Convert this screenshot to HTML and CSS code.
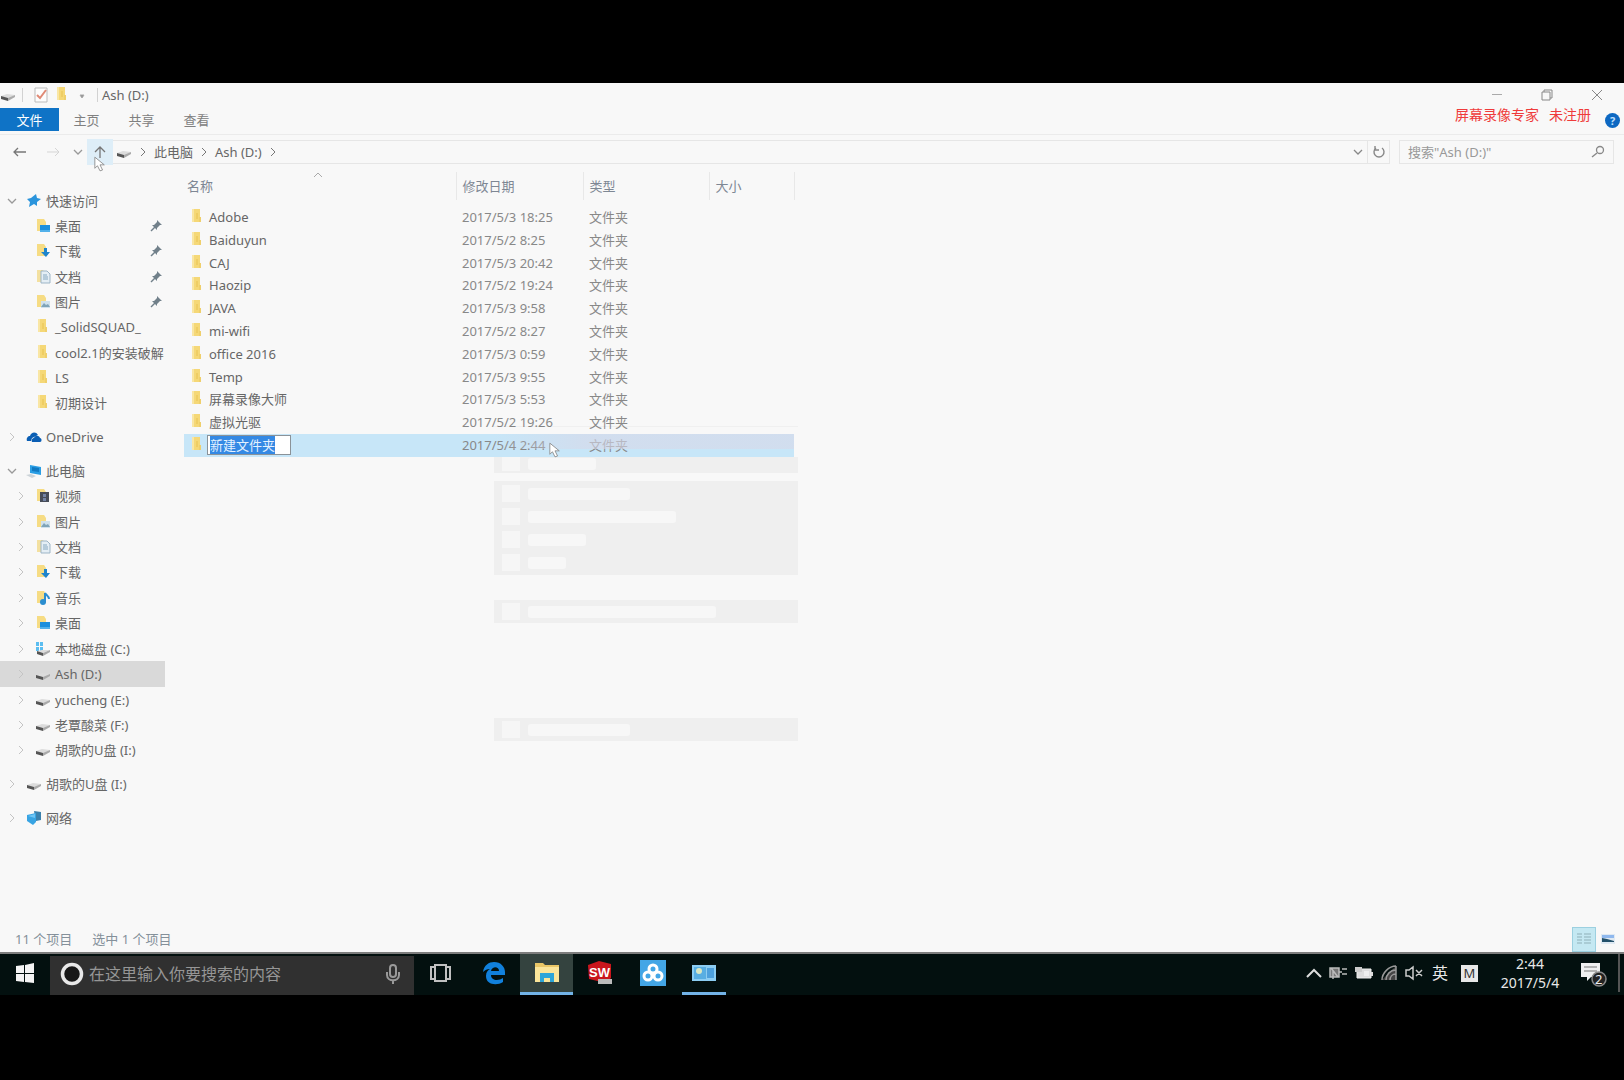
FILE: index.html
```html
<!DOCTYPE html>
<html lang="zh-CN">
<head>
<meta charset="utf-8">
<title>Ash (D:)</title>
<link rel="stylesheet" href="styles.css">
</head>
<body>
<svg class="defs" aria-hidden="true">
  <symbol id="folder" viewBox="0 0 16 16"><path d="M3 0h8v13H3z" fill="#f5d877"/><path d="M10 8h2v5h-2z" fill="#efcf6c"/><path d="M3 0h2v13H3z" fill="#f9e6a4"/><path d="M8 4v6" stroke="#e8c252" stroke-width="1"/></symbol>
  <symbol id="f-desktop" viewBox="0 0 16 16"><path d="M2 1h7l2 3v9H2z" fill="#f6dc84"/><path d="M5 7h10v7H5z" fill="#1b8fdd"/><path d="M5 12h10v2H5z" fill="#52b1ea"/></symbol>
  <symbol id="f-down" viewBox="0 0 16 16"><path d="M2 1h7l2 3v9H2z" fill="#f6dc84"/><path d="M9 5h3v4h3l-4 5-5-5h3z" fill="#1d84cc"/></symbol>
  <symbol id="f-doc" viewBox="0 0 16 16"><path d="M2 1h6l2 3v9H2z" fill="#f3e0a0"/><path d="M6 2h6l3 3v9H6z" fill="#e4eef5" stroke="#9db5c6"/><path d="M8 6h4M8 8h5M8 10h5" stroke="#86a8c0"/></symbol>
  <symbol id="f-pic" viewBox="0 0 16 16"><path d="M2 1h7l2 3v9H2z" fill="#f6dc84"/><path d="M6 7h9v7H6z" fill="#cfe1ec"/><path d="M6 13l3-4 2 2 2-1 2 3z" fill="#7fa4b8"/></symbol>
  <symbol id="f-video" viewBox="0 0 16 16"><path d="M2 1h7l2 3v9H2z" fill="#f6dc84"/><path d="M5 4h9v10H5z" fill="#474d59"/><path d="M8 6h3v3H8zM8 10h3v3H8z" fill="#7484a6"/></symbol>
  <symbol id="f-music" viewBox="0 0 16 16"><path d="M2 1h7l2 3v9H2z" fill="#f6dc84"/><path d="M10 3v9" stroke="#2b8ed0" stroke-width="2"/><path d="M10 3c1 2 4 3 4 6" fill="none" stroke="#2b8ed0" stroke-width="2"/><circle cx="8" cy="12" r="3" fill="#2b8ed0"/></symbol>
  <symbol id="drive" viewBox="0 0 16 16"><path d="M1 9l6-2 8 1-7 4z" fill="#dcdcdc"/><path d="M1 9l7 2v3l-7-2z" fill="#555"/><path d="M8 11l7-3v2l-7 4z" fill="#aaa"/></symbol>
  <symbol id="drive-c" viewBox="0 0 16 16"><path d="M1 1h3v4H1zM5 1h3v4H5zM1 6h3v4H1zM5 6h3v4H5z" fill="#5bbdf0"/><path d="M2 10l5-1 8 0-7 3z" fill="#dcdcdc"/><path d="M2 10l6 2v3l-6-2z" fill="#555"/><path d="M8 12l7-3v2l-7 4z" fill="#aaa"/></symbol>
  <symbol id="star" viewBox="0 0 16 16"><path d="M10 1l1 4 4 1-4 3 0 4-3-2-5 3 1-5-3-3 4-1z" fill="#2a94dc"/></symbol>
  <symbol id="cloud" viewBox="0 0 16 16"><path d="M1 12c-1-3 1-5 3-5 1-4 6-5 8-1L6 9l-1 3z" fill="#0a5eb4"/><path d="M6 13c-1-3 1-4 2-4 1-3 5-3 6 0 2 0 2 4 0 4z" fill="#0a5eb4"/></symbol>
  <symbol id="pc" viewBox="0 0 16 16"><path d="M4 2l11 2v8l-11-2z" fill="#2a9ee4"/><path d="M6 4l7 1v4L6 8z" fill="#1179c2"/><path d="M0 12l5-1 5 2-4 2z" fill="#ccd3d8"/></symbol>
  <symbol id="net" viewBox="0 0 16 16"><path d="M8 1l7 1v8l-5 1z" fill="#3a80ac"/><path d="M1 5l9-2v9l-3 3-6-4z" fill="#38a4e3"/><path d="M2 6l7-2v4z" fill="#6dc4f4"/></symbol>
  <symbol id="right" viewBox="0 0 16 16"><path d="M6 4l4 4-4 4" fill="none" stroke="currentColor"/></symbol>
  <symbol id="down" viewBox="0 0 16 16"><path d="M4 6l4 4 4-4" fill="none" stroke="currentColor" stroke-width="1.3"/></symbol>
  <symbol id="pin" viewBox="0 0 16 16"><path d="M9 2l5 5-2 0-3 3 0 2-5-5 2 0 3-3z" fill="#71808a"/><path d="M7 9l-4 4" stroke="#71808a" stroke-width="1.5"/></symbol>
  <symbol id="pointer" viewBox="0 0 14 18"><path d="M1 1v13l3-3 3 6 3-1-3-6h5z" fill="#fff" stroke="#888"/></symbol>
</svg>

<main class="window">
  <header class="titlebar">
    <svg class="icon"><use href="#drive"/></svg>
    <span class="rule"></span>
    <button class="quick" aria-label="属性"><svg class="icon" viewBox="0 0 16 16"><path d="M2 1h12v14H2z" fill="#fdfdfd" stroke="#bbb"/><path d="M4 8l3 3 6-8" fill="none" stroke="#e08a76" stroke-width="2"/></svg></button>
    <button class="quick" aria-label="新建文件夹"><svg class="icon"><use href="#folder"/></svg></button>
    <button class="quick" aria-label="自定义"><svg class="icon" viewBox="0 0 16 16"><path d="M5 8l2 3 2-3z" fill="#888" stroke="#aaa"/></svg></button>
    <span class="rule"></span>
    <h1 class="title">Ash (D:)</h1>
    <div class="controls">
      <button aria-label="最小化"><svg class="icon" viewBox="0 0 16 16"><path d="M3 7.500h10" stroke="#aaa"/></svg></button>
      <button aria-label="还原"><svg class="icon" viewBox="0 0 16 16"><path d="M3 5h8v8H3zM5 5V3h8v8h-2" fill="none" stroke="#888"/></svg></button>
      <button aria-label="关闭"><svg class="icon" viewBox="0 0 16 16"><path d="M3 3l10 10M13 3L3 13" stroke="#888"/></svg></button>
    </div>
  </header>

  <nav class="tabs">
    <button class="file-tab">文件</button>
    <button>主页</button>
    <button>共享</button>
    <button>查看</button>
    <span class="watermark"><span>屏幕录像专家</span><span>未注册</span></span>
    <button class="help" aria-label="帮助">?</button>
  </nav>

  <div class="address-row">
    <div class="history">
      <button aria-label="后退"><svg class="icon" viewBox="0 0 16 16"><path d="M14 8H2M6 4L2 8l4 4" fill="none" stroke="#777" stroke-width="1.300"/></svg></button>
      <button aria-label="前进"><svg class="icon" viewBox="0 0 16 16"><path d="M2 8h12M10 4l4 4-4 4" fill="none" stroke="#d5d5d5"/></svg></button>
      <button class="recent" aria-label="最近位置"><svg class="icon"><use href="#down"/></svg></button>
      <button class="up" aria-label="上移"><svg class="icon" viewBox="0 0 16 16"><path d="M8 14V3M3 8l5-5 5 5" fill="none" stroke="#777" stroke-width="1.300"/></svg><svg class="pointer up-pointer"><use href="#pointer"/></svg></button>
    </div>
    <div class="address">
      <svg class="icon"><use href="#drive"/></svg>
      <svg class="icon crumb-arrow"><use href="#right"/></svg>
      <a href="#pc">此电脑</a>
      <svg class="icon crumb-arrow"><use href="#right"/></svg>
      <a href="#d">Ash (D:)</a>
      <svg class="icon crumb-arrow"><use href="#right"/></svg>
      <button class="drop" aria-label="历史记录"><svg class="icon"><use href="#down"/></svg></button>
      <button class="refresh" aria-label="刷新"><svg class="icon" viewBox="0 0 16 16"><path d="M5 4a5 5 0 1 0 6 0M4 2v4h4" fill="none" stroke="#888" stroke-width="1.400"/></svg></button>
    </div>
    <label class="search"><input type="text" aria-label="搜索" placeholder='搜索"Ash (D:)"'><svg class="icon" viewBox="0 0 16 16"><circle cx="10" cy="6" r="3.500" fill="none" stroke="#888" stroke-width="1.300"/><path d="M7 9l-5 4" stroke="#888" stroke-width="1.500"/></svg></label>
  </div>

  <div class="content">
    <nav class="tree">
      <ul class="quick-group">
        <li><svg class="icon open"><use href="#down"/></svg><svg class="icon"><use href="#star"/></svg><a href="#q">快速访问</a></li>
        <li class="sub"><i></i><svg class="icon"><use href="#f-desktop"/></svg><a href="#1">桌面</a><svg class="icon pin"><use href="#pin"/></svg></li>
        <li class="sub"><i></i><svg class="icon"><use href="#f-down"/></svg><a href="#2">下载</a><svg class="icon pin"><use href="#pin"/></svg></li>
        <li class="sub"><i></i><svg class="icon"><use href="#f-doc"/></svg><a href="#3">文档</a><svg class="icon pin"><use href="#pin"/></svg></li>
        <li class="sub"><i></i><svg class="icon"><use href="#f-pic"/></svg><a href="#4">图片</a><svg class="icon pin"><use href="#pin"/></svg></li>
        <li class="sub"><i></i><svg class="icon"><use href="#folder"/></svg><a href="#5">_SolidSQUAD_</a></li>
        <li class="sub"><i></i><svg class="icon"><use href="#folder"/></svg><a href="#6">cool2.1的安装破解</a></li>
        <li class="sub"><i></i><svg class="icon"><use href="#folder"/></svg><a href="#7">LS</a></li>
        <li class="sub"><i></i><svg class="icon"><use href="#folder"/></svg><a href="#8">初期设计</a></li>
      </ul>
      <ul><li><svg class="icon closed"><use href="#right"/></svg><svg class="icon"><use href="#cloud"/></svg><a href="#od">OneDrive</a></li></ul>
      <ul class="pc-group">
        <li><svg class="icon open"><use href="#down"/></svg><svg class="icon"><use href="#pc"/></svg><a href="#pc">此电脑</a></li>
        <li class="sub"><svg class="icon closed"><use href="#right"/></svg><svg class="icon"><use href="#f-video"/></svg><a href="#v">视频</a></li>
        <li class="sub"><svg class="icon closed"><use href="#right"/></svg><svg class="icon"><use href="#f-pic"/></svg><a href="#p">图片</a></li>
        <li class="sub"><svg class="icon closed"><use href="#right"/></svg><svg class="icon"><use href="#f-doc"/></svg><a href="#w">文档</a></li>
        <li class="sub"><svg class="icon closed"><use href="#right"/></svg><svg class="icon"><use href="#f-down"/></svg><a href="#x">下载</a></li>
        <li class="sub"><svg class="icon closed"><use href="#right"/></svg><svg class="icon"><use href="#f-music"/></svg><a href="#m">音乐</a></li>
        <li class="sub"><svg class="icon closed"><use href="#right"/></svg><svg class="icon"><use href="#f-desktop"/></svg><a href="#z">桌面</a></li>
        <li class="sub"><svg class="icon closed"><use href="#right"/></svg><svg class="icon"><use href="#drive-c"/></svg><a href="#c">本地磁盘 (C:)</a></li>
        <li class="sub current"><svg class="icon closed"><use href="#right"/></svg><svg class="icon"><use href="#drive"/></svg><a href="#d">Ash (D:)</a></li>
        <li class="sub"><svg class="icon closed"><use href="#right"/></svg><svg class="icon"><use href="#drive"/></svg><a href="#e">yucheng (E:)</a></li>
        <li class="sub"><svg class="icon closed"><use href="#right"/></svg><svg class="icon"><use href="#drive"/></svg><a href="#f">老覃酸菜 (F:)</a></li>
        <li class="sub"><svg class="icon closed"><use href="#right"/></svg><svg class="icon"><use href="#drive"/></svg><a href="#i">胡歌的U盘 (I:)</a></li>
      </ul>
      <ul><li><svg class="icon closed"><use href="#right"/></svg><svg class="icon"><use href="#drive"/></svg><a href="#i">胡歌的U盘 (I:)</a></li></ul>
      <ul><li><svg class="icon closed"><use href="#right"/></svg><svg class="icon"><use href="#net"/></svg><a href="#n">网络</a></li></ul>
    </nav>

    <section class="files">
      <table class="list">
        <colgroup><col class="c-name"><col class="c-date"><col class="c-type"><col class="c-size"></colgroup>
        <thead><tr><th>名称<svg class="sort" viewBox="0 0 10 6"><path d="M1 5l4-4 4 4" fill="none" stroke="#aaa"/></svg></th><th>修改日期</th><th>类型</th><th>大小</th></tr></thead>
        <tbody>
          <tr><td><span class="name"><svg class="icon"><use href="#folder"/></svg>Adobe</span></td><td>2017/5/3 18:25</td><td>文件夹</td><td></td></tr>
          <tr><td><span class="name"><svg class="icon"><use href="#folder"/></svg>Baiduyun</span></td><td>2017/5/2 8:25</td><td>文件夹</td><td></td></tr>
          <tr><td><span class="name"><svg class="icon"><use href="#folder"/></svg>CAJ</span></td><td>2017/5/3 20:42</td><td>文件夹</td><td></td></tr>
          <tr><td><span class="name"><svg class="icon"><use href="#folder"/></svg>Haozip</span></td><td>2017/5/2 19:24</td><td>文件夹</td><td></td></tr>
          <tr><td><span class="name"><svg class="icon"><use href="#folder"/></svg>JAVA</span></td><td>2017/5/3 9:58</td><td>文件夹</td><td></td></tr>
          <tr><td><span class="name"><svg class="icon"><use href="#folder"/></svg>mi-wifi</span></td><td>2017/5/2 8:27</td><td>文件夹</td><td></td></tr>
          <tr><td><span class="name"><svg class="icon"><use href="#folder"/></svg>office 2016</span></td><td>2017/5/3 0:59</td><td>文件夹</td><td></td></tr>
          <tr><td><span class="name"><svg class="icon"><use href="#folder"/></svg>Temp</span></td><td>2017/5/3 9:55</td><td>文件夹</td><td></td></tr>
          <tr><td><span class="name"><svg class="icon"><use href="#folder"/></svg>屏幕录像大师</span></td><td>2017/5/3 5:53</td><td>文件夹</td><td></td></tr>
          <tr><td><span class="name"><svg class="icon"><use href="#folder"/></svg>虚拟光驱</span></td><td>2017/5/2 19:26</td><td>文件夹</td><td></td></tr>
          <tr class="selected"><td><span class="name"><svg class="icon"><use href="#folder"/></svg><input class="rename" type="text" aria-label="文件夹名称" value="新建文件夹"></span></td><td>2017/5/4 2:44</td><td>文件夹</td><td></td></tr>
        </tbody>
      </table>
      <div class="fading-menu" aria-hidden="true">
        <div class="band tint"></div>
        <div class="band first"><p><b></b><s class="w68"></s></p></div>
        <div class="band four"><p><b></b><s class="w100"></s></p><p><b></b><s class="w148"></s></p><p><b></b><s class="w58"></s></p><p><b></b><s class="w38"></s></p></div>
        <div class="band far"><p><b></b><s class="w188"></s></p></div>
        <div class="band last"><p><b></b><s class="w100"></s></p></div>
      </div>
      <svg class="pointer list-pointer"><use href="#pointer"/></svg>
    </section>
  </div>

  <footer class="status">
    <span>11 个项目</span><span>选中 1 个项目</span>
    <div class="views">
      <button class="active" aria-label="详细信息"><svg class="icon" viewBox="0 0 16 16"><path d="M1 3h5M1 6h5M1 9h5M1 12h5M8 3h7M8 6h7M8 9h7M8 12h7" stroke="#8fb0b8"/></svg></button>
      <button aria-label="大图标"><svg class="icon" viewBox="0 0 16 16"><path d="M1 3h14v10H1z" fill="#dfe9f2"/><path d="M2 4h12v3H2z" fill="#8fb8ee"/><path d="M2 7l5 1 7 2v1H2z" fill="#23506a"/></svg></button>
    </div>
  </footer>
</main>

<footer class="taskbar">
  <button class="start" aria-label="开始"><svg class="glyph" viewBox="0 0 24 24"><path d="M3 5l8-1v8H3zM12 4l9-2v10h-9zM3 13h8v8l-8-1zM12 13h9v9l-9-1z" fill="#f4f4f4"/></svg></button>
  <label class="cortana"><svg class="glyph" viewBox="0 0 24 24"><circle cx="12" cy="12" r="9.500" fill="#171717" stroke="#e8e8e8" stroke-width="3.500"/></svg><input type="text" aria-label="搜索" placeholder="在这里输入你要搜索的内容"><svg class="glyph" viewBox="0 0 24 24"><rect x="9" y="3" width="6" height="12" rx="3" fill="none" stroke="#999" stroke-width="2"/><path d="M6 10v3c0 7 12 7 12 0v-3M12 18v4" fill="none" stroke="#999" stroke-width="2"/></svg></label>
  <button class="app" aria-label="任务视图"><svg class="glyph" viewBox="0 0 24 24"><path d="M6 4h11v16H6zM5 6H2v12h3M18 6h3v12h-3" fill="none" stroke="#c0c0c0" stroke-width="2"/></svg></button>
  <button class="app" aria-label="Edge"><svg class="glyph" viewBox="0 0 24 24"><path d="M1 11C2 4 7 1 12 1c7 0 11 5 11 10v3H9c0 6 8 6 12 3v4c-6 4-17 3-17-6 0-4 2-6 4-7-3 0-5 1-7 3zM9 10h8c0-5-7-5-8 0z" fill="#1180dc"/></svg></button>
  <button class="app active" aria-label="文件资源管理器"><svg class="glyph" viewBox="0 0 24 24"><path d="M0 2h8l2 2h14v17H0z" fill="#e9c667"/><path d="M0 6h24v15H0z" fill="#fbe59a"/><path d="M5 12h14v9h-4v-4H9v4H5z" fill="#2da5d8"/></svg></button>
  <button class="app" aria-label="SolidWorks"><svg class="glyph" viewBox="0 0 24 24"><path d="M0 4l11-4 12 3v14l-5 5-17-4z" fill="#c9161d"/><text x="1" y="16" class="sw">SW</text><path d="M10 18h14v5H10z" fill="#bbb"/></svg></button>
  <button class="app" aria-label="百度网盘"><svg class="tile" viewBox="0 0 26 26"><path d="M0 0h26v26H0z" fill="#43a6e6"/><g fill="none" stroke="#fff" stroke-width="3"><circle cx="13" cy="9" r="4"/><circle cx="8" cy="16" r="4"/><circle cx="18" cy="16" r="4"/></g></svg></button>
  <button class="app running" aria-label="控制面板"><svg class="glyph" viewBox="0 0 24 24"><path d="M0 4h24v16H0z" fill="#8ccdf2"/><path d="M2 6h12v12H2z" fill="#58aee2"/><circle cx="7" cy="10" r="3" fill="#d9e7c3"/><path d="M15 7h7v10h-7z" fill="#4da0dc"/></svg></button>
  <div class="tray">
    <svg class="tray-icon" viewBox="0 0 20 20"><path d="M3 14l7-7 7 7" fill="none" stroke="#ddd" stroke-width="2"/></svg>
    <svg class="tray-icon" viewBox="0 0 20 20"><path d="M1 5h9v9H1zM10 9h3M13 6h5M13 11h5M2 5l7 9M4 16V8" fill="#777" stroke="#bbb" stroke-width="1.500"/></svg>
    <svg class="tray-icon" viewBox="0 0 20 20"><path d="M3 6h14v9H3z" fill="#ddd" stroke="#eee"/><path d="M1 4h7v5H1z" fill="#ccc"/><path d="M10 8h5v5h-5z" fill="#eee"/><path d="M18 9v4" stroke="#ddd" stroke-width="2"/></svg>
    <svg class="tray-icon" viewBox="0 0 20 20"><path d="M3 17L17 3v14z" fill="#444"/><path d="M3 17C3 10 10 3 17 3M7 17c0-5 4-10 10-10M11 17c0-3 2-6 6-6M17 3v14" fill="none" stroke="#999" stroke-width="1.500"/></svg>
    <svg class="tray-icon" viewBox="0 0 20 20"><path d="M2 7h3l4-3v12l-4-3H2zM12 7l6 6M18 7l-6 6" fill="none" stroke="#ccc" stroke-width="1.500"/></svg>
    <span class="ime">英</span>
    <span class="ime-mode">M</span>
    <time class="clock"><span>2:44</span><span>2017/5/4</span></time>
    <button class="notify" aria-label="通知"><svg viewBox="0 0 28 28"><path d="M1 4h19v14h-9l-4 4v-4H1z" fill="#f0f0f0"/><path d="M4 8h13M4 12h13" stroke="#777" stroke-width="1"/><circle cx="19" cy="20" r="7" fill="#222" stroke="#888" stroke-width="1.500"/><text x="15" y="25" class="count">2</text></svg></button>
    <span class="show-desktop"></span>
  </div>
</footer>
</body>
</html>
```

FILE: styles.css
```css
* { box-sizing: border-box; }

body {
  margin: 0;
  min-height: 100vh;
  padding: 83px 0 85px;
  display: flex;
  flex-direction: column;
  background: #000;
  color: #666;
  font: 13px/20px "Noto Sans", "Noto Sans CJK SC", sans-serif;
}

button {
  margin: 0;
  padding: 0;
  border: 0;
  background: none;
  color: inherit;
  font: inherit;
  display: flex;
  align-items: center;
  justify-content: center;
}

input {
  min-width: 0;
  margin: 0;
  padding: 0;
  border: 0;
  background: none;
  color: inherit;
  font: inherit;
}

a { color: inherit; text-decoration: none; }
.defs { display: none; }
.icon { width: 16px; height: 16px; flex: none; }

.window {
  flex: 1;
  display: flex;
  flex-direction: column;
  background: #f8f8f8;
}

.titlebar { display: flex; align-items: center; height: 25px; padding-bottom: 1px; }
.rule { width: 1px; height: 14px; margin: 0 4px; background: #d2d2d2; }
.quick { width: 21px; }
.titlebar .rule:first-of-type { margin: 0 7px 0 6px; }
.title { margin: 0; font-size: 13px; font-weight: 400; }
.controls { display: flex; margin-left: auto; margin-right: 2px; }
.controls button { width: 50px; height: 24px; }

.tabs {
  display: flex;
  height: 27px;
  border-bottom: 1px solid #ebebeb;
}
.tabs button { width: 55px; height: 23px; color: #808080; }
.tabs .file-tab { width: 59px; background: #0f73c6; color: #fff; }
.watermark {
  display: flex;
  gap: 10px;
  margin-left: auto;
  height: 16px;
  line-height: 16px;
  font-family: "Liberation Serif", "Noto Sans CJK SC", serif;
  font-size: 14px;
  color: #ef3b3b;
}
.tabs .help {
  width: 15px;
  height: 15px;
  margin: 5px 4px 0 14px;
  border-radius: 50%;
  background: #0d68c2;
  color: #bfe0ff;
  font-size: 11px;
  font-weight: 700;
}

.address-row { display: flex; height: 37px; padding: 4px 10px 0 0; }
.history { display: flex; }
.history button { width: 33px; height: 26px; padding-left: 7px; }
.history .recent { width: 21px; padding-left: 2px; color: #999; }
.history .up { position: relative; width: 26px; padding: 0; background: #deeef8; }
.pointer { position: absolute; width: 12px; height: 16px; }
.up-pointer { left: 7px; top: 17px; }
.address {
  flex: 1;
  display: flex;
  align-items: center;
  height: 24px;
  margin-top: 1px;
  padding-left: 3px;
  border: 1px solid #e6e6e6;
  border-left: 0;
}
.crumb-arrow { margin: 0 3px; color: #777; }
.drop { margin-left: auto; width: 18px; height: 22px; color: #888; }
.refresh { width: 22px; height: 22px; border-left: 1px solid #e6e6e6; }
.search {
  display: flex;
  align-items: center;
  width: 215px;
  height: 24px;
  margin: 1px 0 0 9px;
  padding: 0 7px 0 8px;
  border: 1px solid #e6e6e6;
}
.search input { flex: 1; }
.search input::placeholder { color: #999; opacity: 1; }

.content { flex: 1; display: flex; }
.tree {
  display: flex;
  flex-direction: column;
  gap: 8px;
  width: 165px;
  padding-top: 16px;
}
.tree ul {
  display: flex;
  flex-direction: column;
  height: 26px;
  margin: 0;
  padding: 0;
  list-style: none;
}
.tree .quick-group { height: 228px; }
.tree .pc-group { height: 305px; }
.tree li {
  flex: 1;
  display: flex;
  align-items: center;
  min-height: 0;
  padding-left: 4px;
  overflow: hidden;
  white-space: nowrap;
}
.tree .sub { padding-left: 13px; }
.tree .current { background: #d9d9d9; }
.tree i { width: 16px; flex: none; }
.tree a { margin-left: 4px; }
.tree .closed { color: #c4c4c4; }
.tree .open { color: #999; }
.tree .closed + .icon, .tree .open + .icon, .tree i + .icon { margin-left: 6px; }
.tree .pin { margin: 0 1px 0 auto; }

.files { flex: 1; position: relative; padding-left: 19px; }
.list {
  width: 610px;
  height: 285px;
  table-layout: fixed;
  border-collapse: collapse;
}
.c-name { width: 272px; }
.c-date { width: 127px; }
.c-type { width: 126px; }
.c-size { width: 85px; }
.list th {
  position: relative;
  height: 28px;
  padding: 0 0 0 6px;
  border-right: 1px solid #e8e8e8;
  color: #7e8794;
  font-weight: 400;
  text-align: left;
}
.list th:first-child { padding-left: 3px; }
.sort { position: absolute; left: 129px; top: 0; width: 10px; height: 6px; }
.list tbody::before { content: ""; display: table-row; height: 6px; }
.list td { padding: 0 0 1px 6px; color: #888; }
.list td:first-child { padding-left: 5px; color: #666; }
.name { display: flex; align-items: center; gap: 4px; height: 20px; }
.selected { background: #c7e6f8; }
.rename {
  width: 84px;
  height: 20px;
  margin-left: -2px;
  padding-left: 2px;
  border: 1px solid #8b9298;
  background: linear-gradient(#3489e4, #3489e4) 2px 0 / 65px 18px no-repeat #fff;
  color: #e4f2ff;
}
.list-pointer { left: 384px; top: 270px; }

/* Context menu caught while it fades out over the list. */
.fading-menu {
  position: absolute;
  left: 329px;
  top: 254px;
  width: 304px;
  border-top: 1px solid #00000008;
}
.band { padding: 1px 8px; background: #efefef; }
.band.tint {
  width: 300px;
  height: 15px;
  margin: 7px 0 8px;
  background: linear-gradient(90deg, #d8d8e000, #d8d8e899 30%);
}
.band.first { height: 16px; padding-top: 0; }
.band.first p { height: 14px; }
.band.first b { height: 14px; }
.band.four { margin-top: 8px; padding-bottom: 1px; }
.band.far { margin-top: 25px; }
.band.last { margin-top: 95px; }
.band p { display: flex; align-items: center; gap: 8px; height: 21px; margin: 0; }
.band.four p { height: 23px; }
.band b { width: 18px; height: 17px; background: #f6f6f6; }
.band s { height: 12px; border-radius: 3px; background: #f7f7f7; }
.w38 { width: 38px; }
.w58 { width: 58px; }
.w68 { width: 68px; }
.w100 { width: 102px; }
.w148 { width: 148px; }
.w188 { width: 188px; }

.status {
  display: flex;
  align-items: center;
  gap: 20px;
  height: 25px;
  padding: 0 8px 1px 15px;
  color: #84909a;
}
.views { display: flex; gap: 4px; margin-left: auto; }
.views button { height: 25px; }
.views .active { width: 24px; border: 1px solid #9cd0e0; background: #c4e8f2; }

.taskbar {
  display: flex;
  height: 43px;
  border-top: 2px solid #7d7d7d;
  background: #03100f;
  color: #e8e8e8;
}
.taskbar .glyph { width: 24px; height: 24px; flex: none; }
.start { width: 50px; padding-bottom: 3px; }
.cortana {
  display: flex;
  align-items: center;
  gap: 5px;
  width: 364px;
  margin-top: 2px;
  padding: 0 9px 4px 10px;
  background: #303030;
}
.cortana input { flex: 1; font-size: 16px; }
.cortana input::placeholder { color: #969696; opacity: 1; }
.app { width: 53px; border-bottom: 3px solid transparent; }
.app.active { background: #34433f; border-color: #72b2e6; }
.app.running { width: 44px; margin-left: 3px; border-color: #72b2e6; }
.tile { width: 26px; height: 26px; }
.sw { fill: #fff; font: 700 13px "Liberation Sans", sans-serif; }
.tray { display: flex; align-items: center; gap: 5px; margin-left: auto; padding-bottom: 3px; }
.tray-icon { width: 20px; height: 20px; }
.ime { width: 22px; font-size: 16px; text-align: center; }
.ime-mode {
  width: 17px;
  height: 17px;
  margin: 0 17px 0 5px;
  background: #e8e8e8;
  color: #333;
  line-height: 17px;
  text-align: center;
}
.clock { display: flex; flex-direction: column; width: 60px; font-size: 14px; line-height: 19px; text-align: center; white-space: nowrap; }
.notify { width: 28px; height: 28px; margin-left: 15px; }
.notify svg { width: 28px; height: 28px; }
.count { fill: #eee; font: 13px "Noto Sans", sans-serif; }
.show-desktop { width: 2px; height: 38px; margin: 0 4px 0 5px; background: #555; }
```
